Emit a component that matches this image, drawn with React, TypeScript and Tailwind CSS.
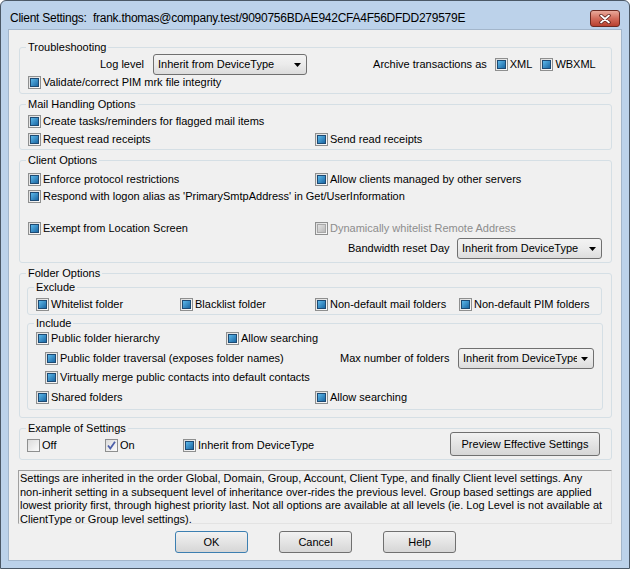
import React from 'react';

type BoxState = 'mixed' | 'off' | 'on' | 'disabled';

function Box({ state = 'mixed' }: { state?: BoxState }) {
  return (
    <span className="w-[13px] h-[13px] shrink-0 border border-[#8e8f8f] bg-linear-to-br from-[#dcdcdc] to-[#fbfbfb] flex items-center justify-center">
      {state === 'mixed' && (
        <span className="w-[9px] h-[9px] border border-[#1d4a73] bg-linear-to-br from-[#5cb8ea] to-[#1a68a4]" />
      )}
      {state === 'disabled' && (
        <span className="w-[9px] h-[9px] border border-[#a8a8a8] bg-linear-to-br from-[#e2e2e2] to-[#b9b9b9]" />
      )}
      {state === 'on' && (
        <svg width="11" height="11" viewBox="0 0 11 11">
          <path d="M2 5.5 L4.3 8.5 L9 1.8" fill="none" stroke="#4c5fa9" strokeWidth="1.8" />
        </svg>
      )}
    </span>
  );
}

function Check({ label, state = 'mixed', className = '' }: { label: string; state?: BoxState; className?: string }) {
  return (
    <div className={`flex items-center gap-[2px] h-[14px] whitespace-nowrap ${className}`}>
      <Box state={state} />
      <span className={state === 'disabled' ? 'text-[#8d8d8d]' : ''}>{label}</span>
    </div>
  );
}

function Arrow() {
  return (
    <svg width="7" height="4" viewBox="0 0 7 4" className="shrink-0">
      <path d="M0 0 H7 L3.5 4 Z" fill="#000" />
    </svg>
  );
}

function Select({ className = '' }: { className?: string }) {
  return (
    <div className={`h-[21px] shrink-0 border border-[#707070] rounded-[3px] bg-linear-to-b from-[#f3f3f3] via-[#ebebeb] to-[#dcdcdc] flex items-center pl-[4px] pr-[5px] gap-[4px] ${className}`}>
      <span className="flex-1 overflow-hidden whitespace-nowrap">Inherit from DeviceType</span>
      <Arrow />
    </div>
  );
}

function Group({ title, className = '', children }: { title: string; className?: string; children: React.ReactNode }) {
  return (
    <fieldset className={`border border-[#d5dfe5] rounded-[3px] ${className}`}>
      <legend className="ml-[6px] px-[2px] h-[13px] leading-[13px]">{title}</legend>
      {children}
    </fieldset>
  );
}

function Button({ label, className = '', primary = false }: { label: string; className?: string; primary?: boolean }) {
  return (
    <button
      className={`border rounded-[3px] bg-linear-to-b from-[#f2f2f2] to-[#d6d6d6] flex items-center justify-center ${primary ? 'border-[#3c7fb1]' : 'border-[#707070]'} ${className}`}
    >
      {label}
    </button>
  );
}

export default function App() {
  return (
    <div className="w-[630px] h-[569px] bg-[#bcd2ea] border border-[#4b5866] rounded-t-[6px] flex flex-col px-[7px] pb-[7px] font-['Liberation_Sans',Arial,sans-serif] text-[11px] leading-[13px] text-black">
      {/* title bar */}
      <div className="h-[28px] flex items-start justify-between">
        <span className="pt-[10px] pl-[2px] text-[12px] leading-[15px] tracking-[-0.25px]">
          Client Settings:&nbsp; frank.thomas@company.test/9090756BDAE942CFA4F56DFDD279579E
        </span>
        <div className="mt-[9px] mr-[2px] w-[30px] h-[17px] rounded-[3px] border border-[#6b2a22] bg-linear-to-b from-[#e9a99b] via-[#d26c5c] to-[#b8402f] flex items-center justify-center">
          <svg width="12" height="10" viewBox="0 0 12 10">
            <path d="M2 1.5 L10 8.5 M10 1.5 L2 8.5" stroke="#5a1e18" strokeWidth="3.4" strokeLinecap="round" />
            <path d="M2 1.5 L10 8.5 M10 1.5 L2 8.5" stroke="#ffffff" strokeWidth="1.8" strokeLinecap="round" />
          </svg>
        </div>
      </div>

      {/* client area */}
      <div className="flex-1 bg-[#f0f0f0] border border-[#a3b6cb] flex flex-col pl-[10px] pt-[11px] whitespace-nowrap">
        <Group title="Troubleshooting" className="w-[593px]">
          <div className="px-[8px] pb-[4px]">
            <div className="flex items-center h-[21px]">
              <span className="ml-[72px]">Log level</span>
              <Select className="ml-[9px] w-[154px]" />
              <span className="ml-[66px]">Archive transactions as</span>
              <Check label="XML" className="ml-[8px]" />
              <Check label="WBXML" className="ml-[8px]" />
            </div>
            <Check label="Validate/correct PIM mrk file integrity" />
          </div>
        </Group>

        <Group title="Mail Handling Options" className="mt-[4px] w-[593px]">
          <div className="grid grid-cols-[287px_1fr] gap-y-[4px] pt-[3px] px-[8px] pb-[3px]">
            <Check label="Create tasks/reminders for flagged mail items" className="col-span-2" />
            <Check label="Request read receipts" />
            <Check label="Send read receipts" />
          </div>
        </Group>

        <Group title="Client Options" className="mt-[4px] w-[593px]">
          <div className="grid grid-cols-[287px_1fr] pt-[5px] px-[8px] pb-[3px]">
            <Check label="Enforce protocol restrictions" />
            <Check label="Allow clients managed by other servers" />
            <Check label="Respond with logon alias as 'PrimarySmtpAddress' in Get/UserInformation" className="col-span-2 mt-[3px]" />
            <Check label="Exempt from Location Screen" className="mt-[18px]" />
            <Check label="Dynamically whitelist Remote Address" state="disabled" className="mt-[18px]" />
            <div className="col-start-2 flex items-center h-[21px] mt-[3px]">
              <span className="ml-[33px] w-[100px]">Bandwidth reset Day</span>
              <Select className="ml-[9px] w-[145px]" />
            </div>
          </div>
        </Group>

        <Group title="Folder Options" className="mt-[4px] w-[593px]">
          <div className="pl-[7px] pb-[7px]">
            <Group title="Exclude" className="mt-[1px] w-[575px]">
              <div className="grid grid-cols-[144px_135px_144px_1fr] pt-[3px] px-[8px] pb-[3px]">
                <Check label="Whitelist folder" />
                <Check label="Blacklist folder" />
                <Check label="Non-default mail folders" />
                <Check label="Non-default PIM folders" />
              </div>
            </Group>
            <Group title="Include" className="mt-[2px] w-[575px]">
              <div className="flex flex-col pt-[1px] px-[8px] pb-[5px]">
                <div className="flex items-center">
                  <Check label="Public folder hierarchy" className="w-[190px]" />
                  <Check label="Allow searching" />
                </div>
                <div className="flex items-center h-[21px] mt-[3px]">
                  <Check label="Public folder traversal (exposes folder names)" className="ml-[9px] w-[295px]" />
                  <span className="w-[109px]">Max number of folders</span>
                  <Select className="ml-[9px] w-[136px]" />
                </div>
                <Check label="Virtually merge public contacts into default contacts" className="ml-[9px] mt-[1px]" />
                <div className="grid grid-cols-[279px_1fr] mt-[6px]">
                  <Check label="Shared folders" />
                  <Check label="Allow searching" />
                </div>
              </div>
            </Group>
          </div>
        </Group>

        <Group title="Example of Settings" className="mt-[4px] w-[593px]">
          <div className="flex items-center h-[21px] pl-[7px] pr-[11px] mb-[3px]">
            <Check label="Off" state="off" className="w-[78px]" />
            <Check label="On" state="on" className="w-[78px]" />
            <Check label="Inherit from DeviceType" />
            <Button label="Preview Effective Settings" className="ml-auto -mt-[3px] w-[150px] h-[24px]" />
          </div>
        </Group>

        <div className="mt-[10px] ml-[-1px] w-[594px] h-[54px] border border-t-[#a0a0a0] border-l-[#a0a0a0] border-r-[#e3e3e3] border-b-[#e3e3e3] pl-[1px] pt-[1px] text-[11px] leading-[13.5px]">
          Settings are inherited in the order Global, Domain, Group, Account, Client Type, and finally Client level settings. Any
          <br />
          non-inherit setting in a subsequent level of inheritance over-rides the previous level. Group based settings are applied
          <br />
          lowest priority first, through highest priority last. Not all options are available at all levels (ie. Log Level is not available at
          <br />
          ClientType or Group level settings).
        </div>

        <div className="flex mt-[7px] ml-[156px] gap-[31px]">
          <Button label="OK" primary className="w-[73px] h-[22px]" />
          <Button label="Cancel" className="w-[73px] h-[22px]" />
          <Button label="Help" className="w-[73px] h-[22px]" />
        </div>
      </div>
    </div>
  );
}
